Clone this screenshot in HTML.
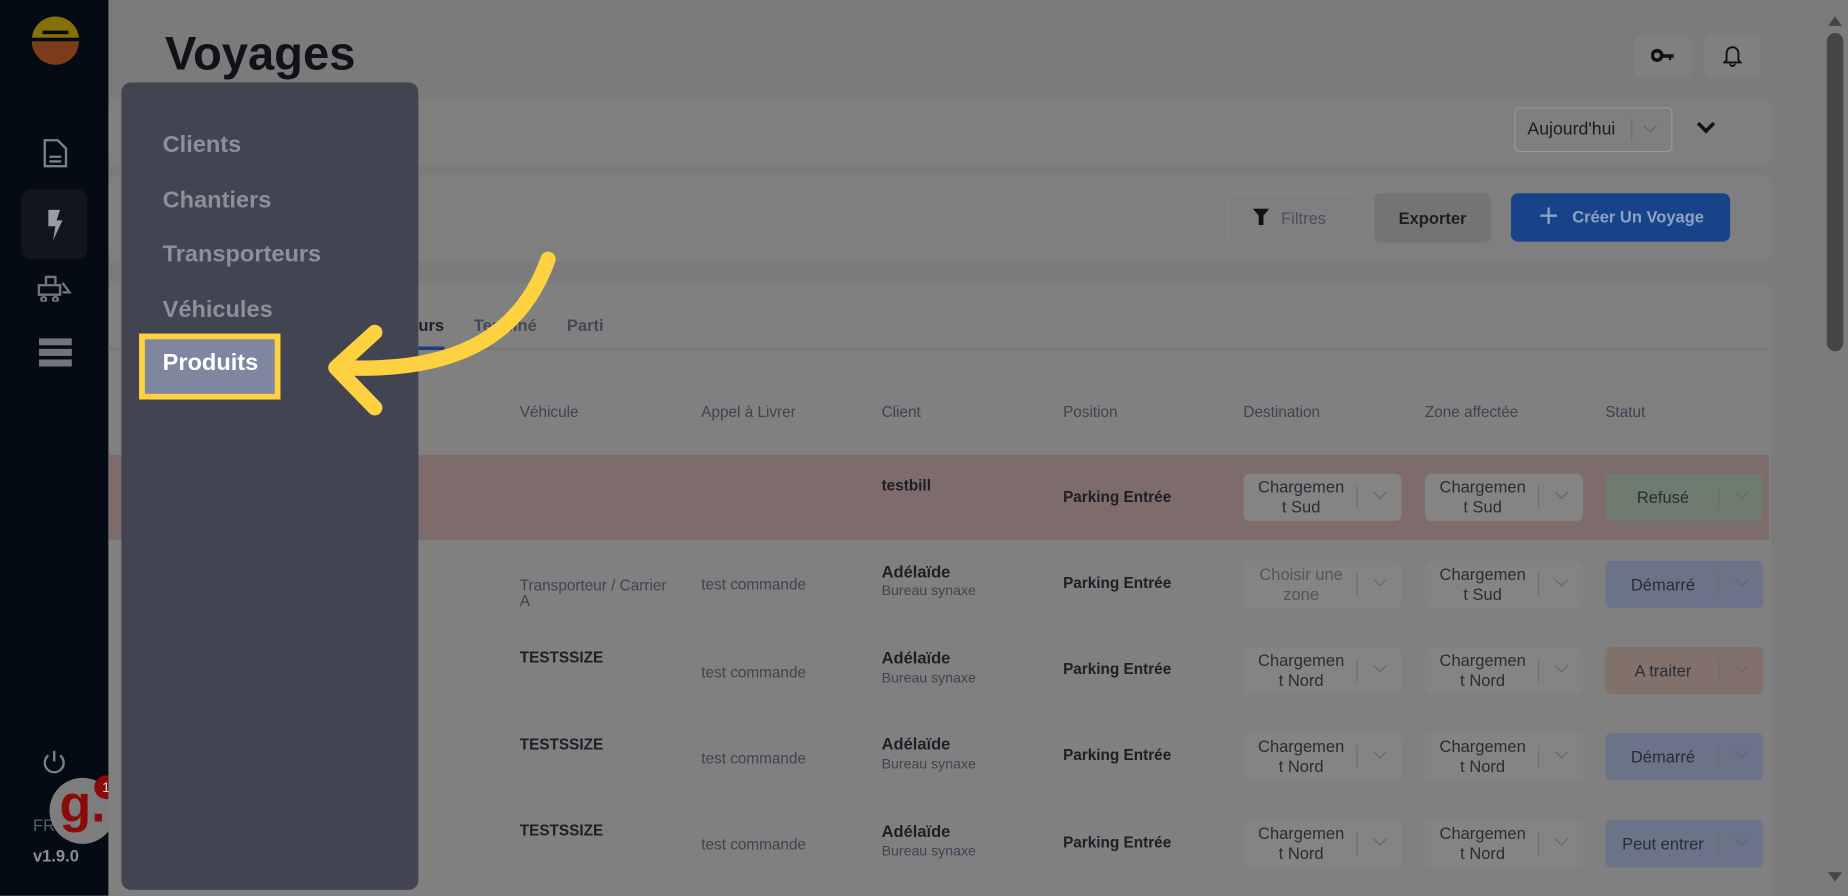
<!DOCTYPE html>
<html><head><meta charset="utf-8"><style>
*{box-sizing:border-box;margin:0;padding:0}
html,body{width:1848px;height:896px;overflow:hidden;background:#7a7a7a}
#s{width:1568px;height:760px;transform:scale(1.17857);transform-origin:0 0;position:relative;font-family:"Liberation Sans",sans-serif;background:#7b7b7b;overflow:hidden}
.a{position:absolute}
.card{position:absolute;background:#7f7f7f;border-radius:8px}
.t{position:absolute;font-size:13px;color:#3e4350}
.b{font-weight:bold;color:#1c1f26}
.sel{position:absolute;width:134px;height:40px;background:#848484;border-radius:5px;font-size:14px;color:#2a2d35;text-align:center;line-height:17px;padding-top:3px;padding-right:36px;white-space:nowrap}
.sel:after{content:"";position:absolute;right:37px;top:10px;height:20px;border-left:1px solid #6f6f6f}
.sel i{position:absolute;right:14px;top:12px;width:8px;height:8px;border-right:1.5px solid #666;border-bottom:1.5px solid #666;transform:rotate(45deg)}
.one{line-height:40px;padding-top:0}
.m{position:absolute;left:138px;font-size:20px;font-weight:bold;color:#8d8f99}
</style></head><body><div id="s">
<div class="a" style="left:0;top:0;width:92px;height:760px;background:#050b14"></div>
<svg class="a" style="left:26px;top:14px" width="42" height="42" viewBox="0 0 42 42"><path d="M1 20 A20 20 0 0 1 41 20 Z" fill="#86700a"/><rect x="10" y="12" width="22" height="3" fill="#050b14"/><rect x="1" y="18" width="40" height="3" fill="#050b14"/><path d="M1 21 H41 A20 20 0 0 1 1 21Z" fill="#7b3c1c"/></svg>
<svg class="a" style="left:36px;top:117px" width="22" height="26" viewBox="0 0 22 26" fill="none" stroke="#7a7f88" stroke-width="2"><path d="M2 2h11l7 7v15H2z M6 16h10 M6 20h10"/></svg>
<div class="a" style="left:18px;top:161px;width:56px;height:59px;background:#121420;border-radius:8px"></div>
<svg class="a" style="left:38px;top:178px" width="16" height="26" viewBox="0 0 16 26"><path d="M3 0h10l-3 9h5L7 26l2-12H3z" fill="#9a9ca4"/></svg>
<svg class="a" style="left:31px;top:232px" width="30" height="24" viewBox="0 0 30 24" fill="none" stroke="#70747c" stroke-width="2"><path d="M2 10h18v8H2z M8 10V3h8v7 M22 8l6 8h-6 M6 20a2 2 0 1 0 .1 0 M16 20a2 2 0 1 0 .1 0"/></svg>
<svg class="a" style="left:33px;top:287px" width="28" height="24" viewBox="0 0 28 24" fill="#70747c"><rect y="0" width="28" height="6"/><rect y="9" width="28" height="6"/><rect y="18" width="28" height="6"/></svg>
<svg class="a" style="left:36px;top:636px" width="20" height="22" viewBox="0 0 20 22" fill="none" stroke="#7a7f88" stroke-width="2"><path d="M10 1v9 M5 5a8 8 0 1 0 10 0"/></svg>
<div class="a" style="left:28px;top:692px;color:#5a5f68;font-size:14px">FR</div>
<div class="a" style="left:28px;top:718px;color:#8a8e96;font-size:14px;font-weight:bold">v1.9.0</div>
<div class="a" style="left:42px;top:660px;width:56px;height:56px;border-radius:50%;background:#7d7d7d;color:#8b0b0b;font-size:44px;font-weight:bold;text-align:center;line-height:46px">g.</div>
<div class="a" style="left:80px;top:658px;width:20px;height:20px;border-radius:50%;background:#8b0b0b;color:#ddd;font-size:12px;text-align:center;line-height:20px">1</div>
<div class="a" style="left:140px;top:24px;font-size:40px;font-weight:bold;color:#101218">Voyages</div>
<div class="a" style="left:1387px;top:30px;width:48px;height:36px;background:#808080;border-radius:6px"></div>
<div class="a" style="left:1446px;top:30px;width:48px;height:36px;background:#808080;border-radius:6px"></div>
<svg class="a" style="left:1401px;top:40px" width="20" height="14" viewBox="0 0 20 14"><circle cx="5" cy="7" r="4" fill="none" stroke="#111" stroke-width="3"/><path d="M9 6h10v3h-2v2h-2V9h-6z" fill="#111"/></svg>
<svg class="a" style="left:1462px;top:37px" width="16" height="20" viewBox="0 0 16 20" fill="none" stroke="#111" stroke-width="1.6"><path d="M3 14V8a5 5 0 0 1 10 0v6l2 2H1z M6 17a2 2 0 0 0 4 0"/></svg>
<div class="card" style="left:92px;top:84px;width:1411px;height:56px"></div>
<div class="a" style="left:1285px;top:91px;width:134px;height:38px;border:1px solid #999;border-radius:4px;font-size:15px;color:#1a1c22;padding:9px 10px">Aujourd'hui<span style="position:absolute;left:98px;top:8px;height:20px;border-left:1px solid #6f6f6f"></span><span style="position:absolute;right:14px;top:11px;width:8px;height:8px;border-right:1.5px solid #666;border-bottom:1.5px solid #666;transform:rotate(45deg)"></span></div>
<div class="a" style="left:1442px;top:100px;width:11px;height:11px;border-right:3px solid #111;border-bottom:3px solid #111;transform:rotate(45deg)"></div>
<div class="card" style="left:92px;top:148px;width:1411px;height:74px"></div>
<div class="a" style="left:1042px;top:164px;width:108px;height:42px;border:1px solid #858585;border-radius:6px;font-size:14px;color:#4a4f5c;padding:12px 0 0 44px">Filtres</div>
<svg class="a" style="left:1063px;top:177px" width="14" height="14" viewBox="0 0 14 14"><path d="M0 0h14L9 6v8H5V6z" fill="#111"/></svg>
<div class="a" style="left:1166px;top:164px;width:99px;height:42px;background:#747474;border-radius:6px;font-size:14px;font-weight:bold;color:#1c1f26;text-align:center;line-height:42px">Exporter</div>
<div class="a" style="left:1282px;top:164px;width:186px;height:41px;background:#174488;border-radius:6px;font-size:14px;font-weight:bold;color:#8ea2c4;line-height:41px;padding-left:52px">Créer Un Voyage</div>
<div class="a" style="left:1307px;top:182px;width:14px;height:2px;background:#8ea2c4"></div><div class="a" style="left:1313px;top:176px;width:2px;height:14px;background:#8ea2c4"></div>
<div class="card" style="left:92px;top:240px;width:1411px;height:530px;background:#808080"></div>
<div class="a" style="left:92px;top:295px;width:1409px;height:2px;background:#777"></div>
<div class="a" style="left:330px;top:294px;width:47px;height:3px;background:#1b3f7a"></div>
<div class="t b" style="left:355px;top:268px;font-size:14px">urs</div>
<div class="t" style="left:402px;top:268px;font-size:14px;font-weight:bold;color:#444955">Terminé</div>
<div class="t" style="left:481px;top:268px;font-size:14px;font-weight:bold;color:#444955">Parti</div>
<div class="t" style="left:441px;top:342px">Véhicule</div><div class="t" style="left:595px;top:342px">Appel à Livrer</div><div class="t" style="left:748px;top:342px">Client</div><div class="t" style="left:902px;top:342px">Position</div><div class="t" style="left:1055px;top:342px">Destination</div><div class="t" style="left:1209px;top:342px">Zone affectée</div><div class="t" style="left:1362px;top:342px">Statut</div>
<div class="a" style="left:92px;top:386px;width:1409px;height:72px;background:#7e6b6b"></div>
<div class="t b" style="left:748px;top:404px">testbill</div><div class="t b" style="left:902px;top:414px">Parking Entrée</div>
<div class="sel" style="left:1055px;top:402px">Chargemen<br>t Sud<i></i></div><div class="sel" style="left:1209px;top:402px">Chargemen<br>t Sud<i></i></div>
<div class="sel one" style="left:1362px;top:402px;background:#6f7b6e">Refusé<i></i></div>
<div class="t" style="left:441px;top:490px;line-height:13px">Transporteur / Carrier<br>A</div><div class="t" style="left:595px;top:488px">test commande</div>
<div class="t b" style="left:748px;top:477px;font-size:14px">Adélaïde</div><div class="t" style="left:748px;top:494px;font-size:12px">Bureau synaxe</div><div class="t b" style="left:902px;top:487px">Parking Entrée</div>
<div class="sel" style="left:1055px;top:476px;color:#555">Choisir une<br>zone<i></i></div><div class="sel" style="left:1209px;top:476px">Chargemen<br>t Sud<i></i></div>
<div class="sel one" style="left:1362px;top:476px;background:#6b7388">Démarré<i></i></div>
<div class="t b" style="left:441px;top:550px">TESTSSIZE</div><div class="t" style="left:595px;top:563px">test commande</div>
<div class="t b" style="left:748px;top:550px;font-size:14px">Adélaïde</div><div class="t" style="left:748px;top:568px;font-size:12px">Bureau synaxe</div><div class="t b" style="left:902px;top:560px">Parking Entrée</div>
<div class="sel" style="left:1055px;top:549px">Chargemen<br>t Nord<i></i></div><div class="sel" style="left:1209px;top:549px">Chargemen<br>t Nord<i></i></div>
<div class="sel one" style="left:1362px;top:549px;background:#82706b">A traiter<i></i></div>
<div class="t b" style="left:441px;top:624px">TESTSSIZE</div><div class="t" style="left:595px;top:636px">test commande</div>
<div class="t b" style="left:748px;top:623px;font-size:14px">Adélaïde</div><div class="t" style="left:748px;top:641px;font-size:12px">Bureau synaxe</div><div class="t b" style="left:902px;top:633px">Parking Entrée</div>
<div class="sel" style="left:1055px;top:622px">Chargemen<br>t Nord<i></i></div><div class="sel" style="left:1209px;top:622px">Chargemen<br>t Nord<i></i></div>
<div class="sel one" style="left:1362px;top:622px;background:#6b7388">Démarré<i></i></div>
<div class="t b" style="left:441px;top:697px">TESTSSIZE</div><div class="t" style="left:595px;top:709px">test commande</div>
<div class="t b" style="left:748px;top:697px;font-size:14px">Adélaïde</div><div class="t" style="left:748px;top:715px;font-size:12px">Bureau synaxe</div><div class="t b" style="left:902px;top:707px">Parking Entrée</div>
<div class="sel" style="left:1055px;top:696px">Chargemen<br>t Nord<i></i></div><div class="sel" style="left:1209px;top:696px">Chargemen<br>t Nord<i></i></div>
<div class="sel one" style="left:1362px;top:696px;background:#6b7388">Peut entrer<i></i></div>
<div class="a" style="left:1550px;top:28px;width:14px;height:270px;background:#454545;border-radius:7px"></div>
<div class="a" style="left:1551px;top:14px;width:0;height:0;border-left:6px solid transparent;border-right:6px solid transparent;border-bottom:8px solid #454545"></div>
<div class="a" style="left:1551px;top:740px;width:0;height:0;border-left:6px solid transparent;border-right:6px solid transparent;border-top:8px solid #454545"></div>
<div class="a" style="left:103px;top:70px;width:252px;height:685px;background:#434451;border-radius:8px"></div>
<div class="m" style="top:112px">Clients</div><div class="m" style="top:159px">Chantiers</div><div class="m" style="top:205px">Transporteurs</div><div class="m" style="top:252px">Véhicules</div>
<div class="a" style="left:118px;top:283px;width:120px;height:56px;border:5px solid #fdd13f;background:#fdd13f"><div style="background:#7f87a0;width:100%;height:100%;color:#fff;font-size:20px;font-weight:bold;padding:9px 0 0 15px">Produits</div></div>
<svg class="a" style="left:0;top:0" width="1568" height="760"><g fill="none" stroke="#fdd13f" stroke-width="13" stroke-linecap="round" stroke-linejoin="round"><path d="M465 220 C440 290 380 316 290 312"/><path d="M318 282 L285 312 L318 346"/></g></svg>
</div></body></html>
